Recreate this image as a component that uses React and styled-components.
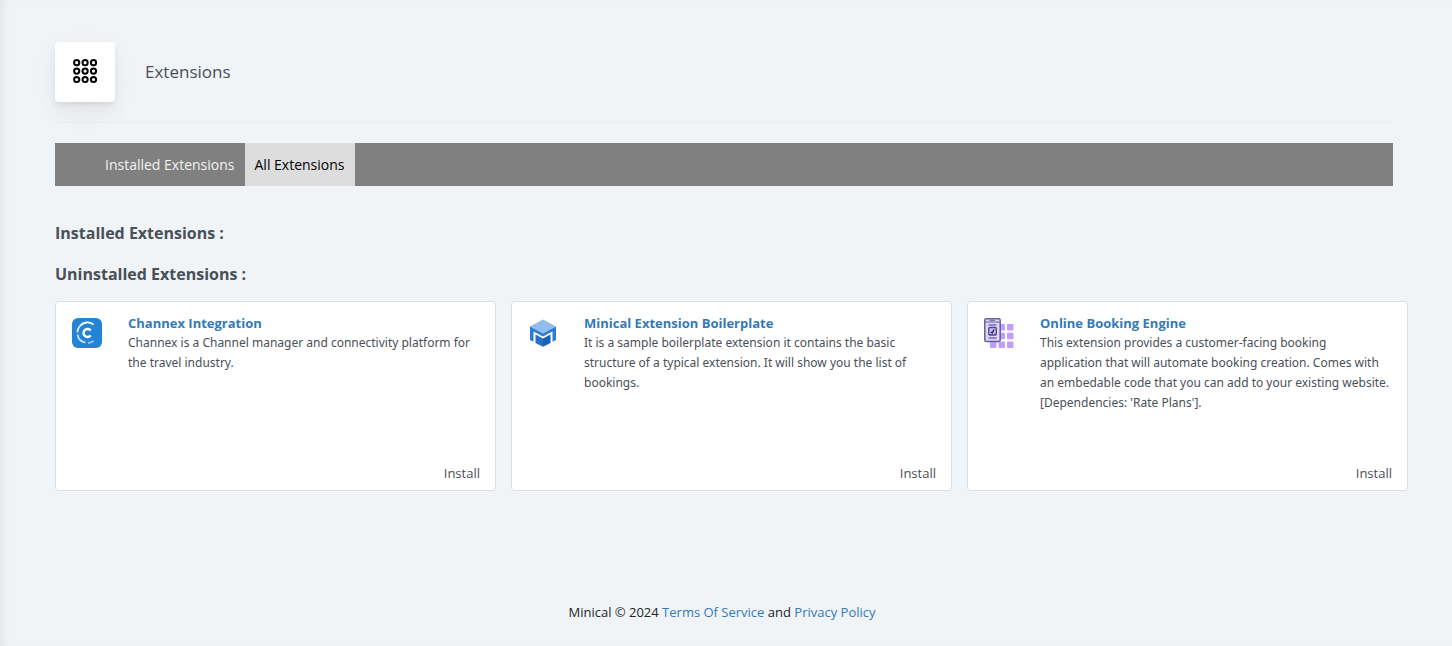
import React from "react";
import styled, { createGlobalStyle } from "styled-components";

const GlobalStyle = createGlobalStyle`
  *, *::before, *::after { box-sizing: border-box; }
  body {
    margin: 0;
    background: #f0f4f7;
    color: #495057;
    font-family: "Segoe UI", "Open Sans", "Noto Sans", sans-serif;
    font-size: 13px;
    line-height: 20px;
  }
`;

const Page = styled.div`
  min-height: 100vh;
  padding: 42px 59px 24px 55px;
  box-shadow: inset 8px 0 8px -6px rgba(70, 80, 100, 0.1);
  overflow-x: hidden;
`;

const Header = styled.header`
  display: flex;
  align-items: center;
  gap: 30px;
  padding-bottom: 20px;
  border-bottom: 1px solid #ebedef;
`;

const IconTile = styled.div`
  display: grid;
  place-items: center;
  width: 60px;
  height: 60px;
  border-radius: 4px;
  background: #fff;
  box-shadow: 0 7px 35px rgba(4, 9, 20, 0.03), 0 15px 22px rgba(4, 9, 20, 0.03),
    0 4px 8px rgba(4, 9, 20, 0.05), 0 2px 3px rgba(4, 9, 20, 0.03);
`;

const Title = styled.h1`
  margin: 0;
  font-size: 17px;
  font-weight: 400;
  line-height: 28px;
`;

const Tabs = styled.nav`
  display: flex;
  margin-top: 20px;
  padding-left: 40px;
  background: #808080;
`;

const Tab = styled.a`
  padding: 11px 10px;
  background: ${(p) => (p.$active ? "#dddddd" : "transparent")};
  color: ${(p) => (p.$active ? "#000" : "#f2f2f2")};
  font-size: 14px;
  line-height: 21px;
  text-decoration: none;
`;

const Sections = styled.main`
  display: grid;
  gap: 13px;
  padding-top: 33px;
`;

const SectionTitle = styled.h2`
  margin: 0;
  font-size: 16px;
  font-weight: 700;
  line-height: 28px;
`;

const CardGrid = styled.div`
  display: grid;
  grid-template-columns: repeat(3, 1fr);
  gap: 15px;
  margin-right: -15px;
`;

const Card = styled.article`
  display: flex;
  flex-direction: column;
  justify-content: space-between;
  min-height: 190px;
  padding: 11px 10px 7px 16px;
  border: 1px solid #dcdfe2;
  border-radius: 4px;
  background: #fff;
`;

const CardBody = styled.div`
  display: grid;
  grid-template-columns: 30px 1fr;
  gap: 26px;
`;

const Logo = styled.svg`
  width: 30px;
  height: 30px;
  margin-top: 5px;
`;

const CardTitle = styled.a`
  color: #337ab7;
  font-weight: 700;
  text-decoration: none;
`;

const Description = styled.p`
  margin: 0;
  font-family: "Segoe UI", "Noto Sans", sans-serif;
  font-size: 12px;
  white-space: pre-line;
`;

const InstallButton = styled.button`
  align-self: flex-end;
  margin-right: 5px;
  padding: 0;
  border: 0;
  background: none;
  color: inherit;
  font: inherit;
  cursor: pointer;
`;

const Footer = styled.footer`
  margin-top: 111px;
  padding-right: 4px;
  color: #212529;
  text-align: center;
`;

const FooterLink = styled.a`
  color: #337ab7;
  text-decoration: none;
`;

const steps = [0, 1, 2];

function GridIcon() {
  return (
    <svg width="26" height="26" viewBox="0 0 26 26" fill="none" stroke="#000" strokeWidth="2" aria-hidden="true">
      {steps.map((row) =>
        steps.map((col) => (
          <circle key={`${row}-${col}`} cx={4.7 + col * 8.4} cy={3.7 + row * 8.4} r="2.6" />
        ))
      )}
    </svg>
  );
}

function ChannexLogo() {
  return (
    <Logo viewBox="0 0 30 30" fill="none" aria-hidden="true">
      <rect width="30" height="30" rx="6" fill="#2383d5" />
      <path d="M21.5 6.5A10 10 0 0 0 8 7.8" stroke="#fff" strokeWidth="1.8" />
      <path d="M8 7.8A10 10 0 0 0 5.4 14.5" stroke="#d5e8f8" strokeWidth="1.8" />
      <path d="M5.5 16.5A10 10 0 0 0 13.5 24.7" stroke="#c6dff5" strokeWidth="1.8" />
      <path d="M16 24.9A10 10 0 0 0 21.7 22.7" stroke="#92c1eb" strokeWidth="2" />
      <path d="M18.7 12.6A4 4 0 1 0 18.7 17.4" stroke="#fff" strokeWidth="2.4" />
    </Logo>
  );
}

function MinicalLogo() {
  return (
    <Logo viewBox="0 0 30 30" aria-hidden="true">
      <path d="M15 1.5L28 8.5L15 15.5L2 8.5Z" fill="#91bdec" />
      <path d="M2 8.5L15 15.5L28 8.5V22L24.5 23.8V13.5L15 18.5L5.5 13.5V23.8L2 22Z" fill="#2d7cd3" />
      <path d="M7.5 16.5L15 20.5V28.8L7.5 25Z" fill="#2570c5" />
      <path d="M22.5 16.5L15 20.5V28.8L22.5 25Z" fill="#1762bb" />
    </Logo>
  );
}

function BookingLogo() {
  return (
    <Logo viewBox="0 0 30 30" fill="none" aria-hidden="true">
      {steps.map((row) =>
        steps.map((col) => (
          <rect key={`${row}-${col}`} x={6 + col * 8.5} y={6 + row * 8.7} width="6.5" height="6.5" rx="1" fill="#c29cfa" />
        ))
      )}
      <rect x="0.8" y="0.8" width="15.4" height="22.6" rx="1.5" fill="#ddd6f2" stroke="#65619f" strokeWidth="1.5" />
      <path d="M1 4H16M5.5 2.3H11" stroke="#65619f" />
      <path d="M4.5 7H12.5M4.5 20H12.5" stroke="#8264c5" strokeWidth="1.4" />
      <rect x="4.8" y="9.5" width="7.5" height="7.5" rx="1" fill="#cabbee" stroke="#4c408f" strokeWidth="1.3" />
      <path d="M6.8 14.2L8.2 15L10 11.5" stroke="#36266f" strokeWidth="1.5" />
    </Logo>
  );
}

const extensions = [
  {
    name: "Channex Integration",
    Icon: ChannexLogo,
    text: "Channex is a Channel manager and connectivity platform for the travel industry.",
  },
  {
    name: "Minical Extension Boilerplate",
    Icon: MinicalLogo,
    text: "It is a sample boilerplate extension it contains the basic structure of a typical extension. It will show you the list of bookings.",
  },
  {
    name: "Online Booking Engine",
    Icon: BookingLogo,
    text: "This extension provides a customer-facing booking\napplication that will automate booking creation. Comes with\nan embedable code that you can add to your existing website.\n[Dependencies: 'Rate Plans'].",
  },
];

export default function App() {
  return (
    <>
      <GlobalStyle />
      <Page>
        <Header>
          <IconTile>
            <GridIcon />
          </IconTile>
          <Title>Extensions</Title>
        </Header>
        <Tabs>
          <Tab href="#installed">Installed Extensions</Tab>
          <Tab href="#all" $active aria-current="page">All Extensions</Tab>
        </Tabs>
        <Sections>
          <SectionTitle>Installed Extensions :</SectionTitle>
          <SectionTitle>Uninstalled Extensions :</SectionTitle>
          <CardGrid>
            {extensions.map(({ name, Icon, text }) => (
              <Card key={name}>
                <CardBody>
                  <Icon />
                  <div>
                    <CardTitle href="#extension">{name}</CardTitle>
                    <Description>{text}</Description>
                  </div>
                </CardBody>
                <InstallButton type="button">Install</InstallButton>
              </Card>
            ))}
          </CardGrid>
        </Sections>
        <Footer>
          Minical © 2024 <FooterLink href="#terms">Terms Of Service</FooterLink> and{" "}
          <FooterLink href="#privacy">Privacy Policy</FooterLink>
        </Footer>
      </Page>
    </>
  );
}
